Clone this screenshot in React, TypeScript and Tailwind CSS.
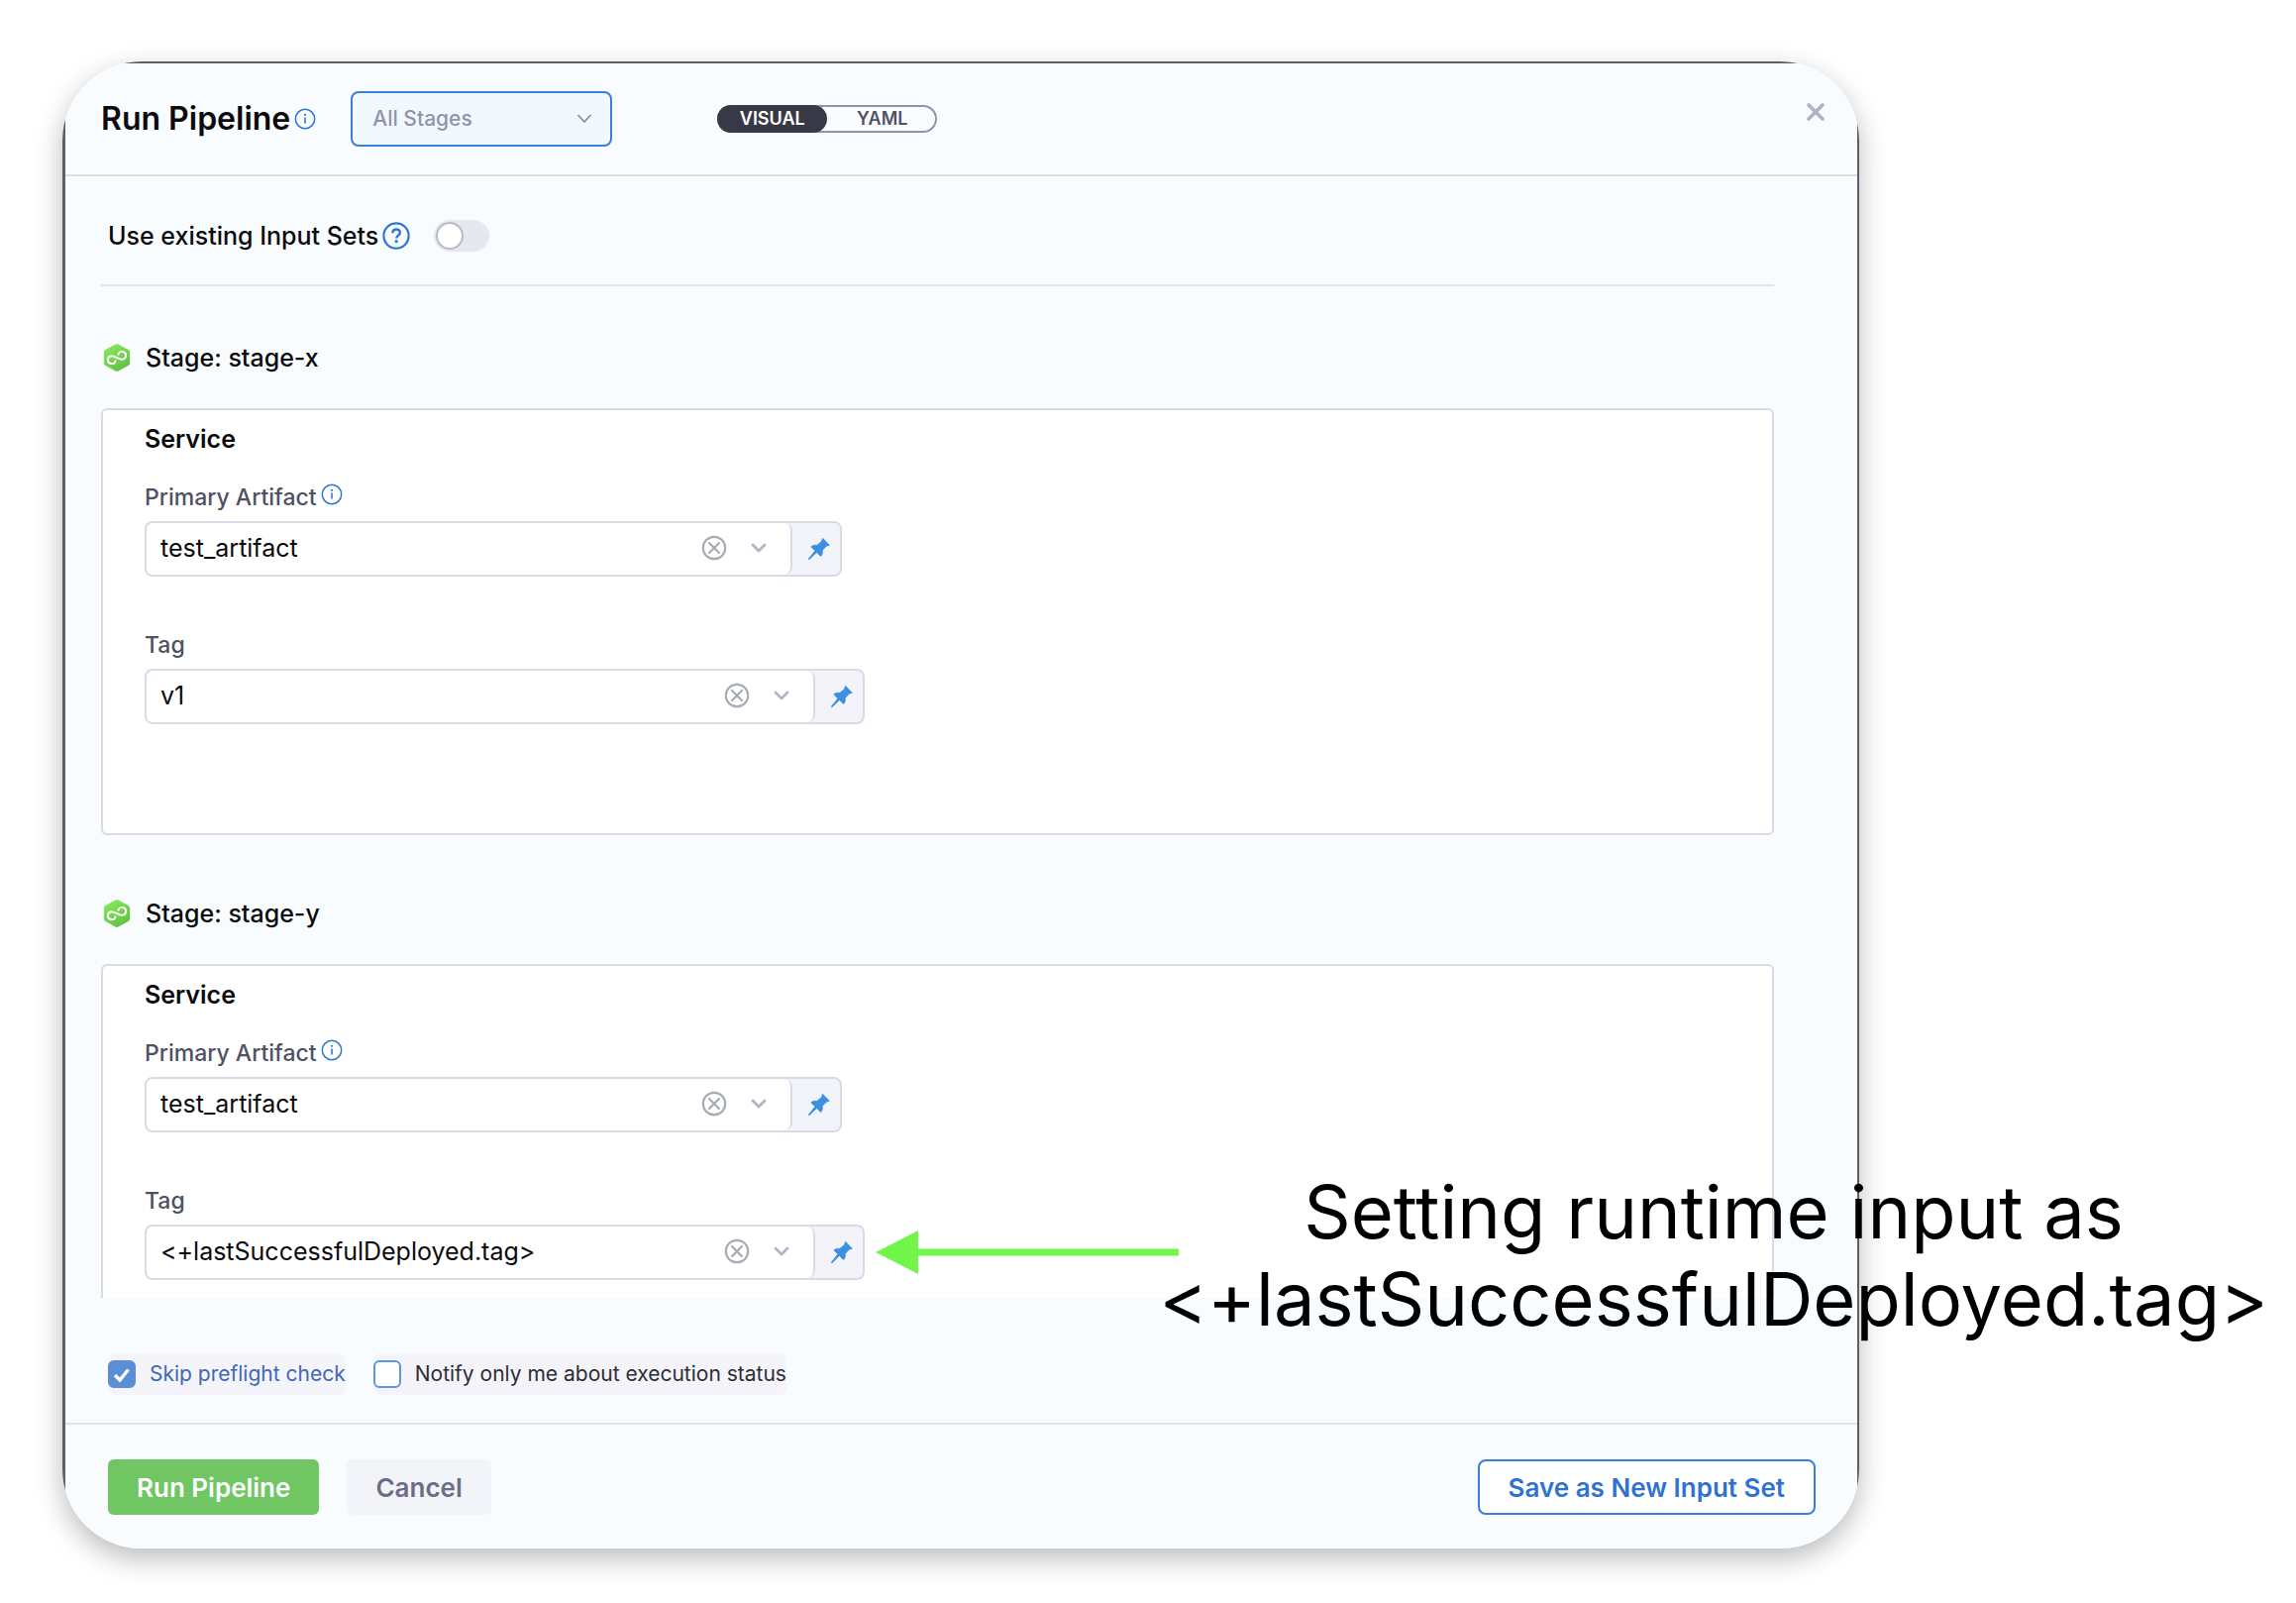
import { useState } from "react";

function InfoIcon() {
  return (
    <svg className="size-[22px] shrink-0" viewBox="0 0 22 22" fill="none" aria-hidden="true">
      <circle cx="11" cy="11" r="9.7" stroke="#2f77d6" strokeWidth="1.5" />
      <circle cx="11" cy="6.8" r="1.1" fill="#2f77d6" />
      <path d="M11 9.6v6" stroke="#2f77d6" strokeWidth="1.6" />
    </svg>
  );
}

function HelpIcon() {
  return (
    <svg className="size-7 shrink-0" viewBox="0 0 28 28" fill="none" aria-hidden="true">
      <circle cx="14" cy="14" r="12.6" stroke="#2b76d8" strokeWidth="2.2" />
      <path
        d="M10.4 11.3c0-2.3 1.5-3.8 3.7-3.8s3.7 1.4 3.7 3.4c0 2.7-3.5 2.9-3.5 5.6"
        stroke="#2b76d8"
        strokeWidth="2.4"
      />
      <circle cx="14.2" cy="19.6" r="1.6" fill="#2b76d8" />
    </svg>
  );
}

function DeployIcon() {
  return (
    <svg className="h-[30px] w-7 shrink-0" viewBox="0 0 28 30" fill="none" aria-hidden="true">
      <defs>
        <linearGradient id="hex" x1="6" y1="2" x2="22" y2="28" gradientUnits="userSpaceOnUse">
          <stop stopColor="#86e958" />
          <stop offset="1" stopColor="#62bf43" />
        </linearGradient>
      </defs>
      <path
        d="M12.6 1.5a2.8 2.8 0 0 1 2.8 0l10.2 5.4a2.8 2.8 0 0 1 1.5 2.5v11.2a2.8 2.8 0 0 1-1.5 2.5l-10.2 5.4a2.8 2.8 0 0 1-2.8 0L2.4 23.1a2.8 2.8 0 0 1-1.5-2.5V9.4a2.8 2.8 0 0 1 1.500-2.500z"
        fill="url(#hex)"
      />
      <path
        d="M12.6 18.2A3.9 3.9 0 1 1 9 13.300C12 13.300 15.500 16.700 19 16.700A3.900 3.900 0 1 0 15.400 11.800"
        stroke="#fff"
        strokeWidth="1.9"
        strokeLinecap="round"
      />
    </svg>
  );
}

function ClearIcon() {
  return (
    <svg className="size-[26px]" viewBox="0 0 26 26" fill="none" stroke="#a6abb6" strokeWidth="2.2" aria-hidden="true">
      <circle cx="13" cy="13" r="11.2" />
      <path d="M8 8l10 10M18 8L8 18" strokeLinecap="round" />
    </svg>
  );
}

function Chevron() {
  return (
    <svg className="h-3 w-4" viewBox="0 0 16 12" fill="none" aria-hidden="true">
      <path d="M2 3l6 6 6-6" stroke="#b2b3c5" strokeWidth="2.8" strokeLinecap="round" strokeLinejoin="round" />
    </svg>
  );
}

function PinIcon() {
  return (
    <svg className="size-6" viewBox="0 0 24 24" aria-hidden="true">
      <path
        d="M15.600 1.300L22.300 8.200L19.200 9.200L15.200 13.600C15.700 15.800 15.200 17.900 13.600 19.600L9.500 15.500L1.900 22.800L1.300 22.200L7.900 13.900L3.800 9.900C5.400 8.400 7.600 8 9.700 8.500L14.500 4.500Z"
        fill="#3d8fe0"
        stroke="#3d8fe0"
        strokeWidth="0.8"
        strokeLinejoin="round"
      />
    </svg>
  );
}

function Field({ id, label, info, value, width }: { id: string; label: string; info?: boolean; value: string; width: string }) {
  const [text, setText] = useState(value);
  return (
    <div>
      <div className="flex h-8 items-center gap-1">
        <label htmlFor={id} className="text-[23px] leading-8 font-medium text-[#4f5162]">
          {label}
        </label>
        {info && (
          <span className="pb-1.5">
            <InfoIcon />
          </span>
        )}
      </div>
      <div className={`mt-2 flex h-14 max-w-full overflow-hidden rounded-lg border-2 border-[#d9dae6] bg-[#f3f3fa] ${width}`}>
        <div className="flex min-w-0 flex-1 items-center rounded-r-lg border-r-2 border-[#d9dae6] bg-white pr-6 pb-0.5">
          <input
            id={id}
            type="text"
            value={text}
            onChange={(e) => setText(e.target.value)}
            className="h-full min-w-0 flex-1 bg-transparent pl-3.5 text-[25px] text-[#0b0b0d] outline-none"
          />
          <button type="button" aria-label={`Clear ${label}`} className="mr-6" onClick={() => setText("")}>
            <ClearIcon />
          </button>
          <button type="button" aria-label={`Show ${label} options`}>
            <Chevron />
          </button>
        </div>
        <button type="button" aria-label={`${label} value type`} className="flex w-12 items-center justify-center pl-1.5">
          <PinIcon />
        </button>
      </div>
    </div>
  );
}

function Stage({ name, tag, last }: { name: string; tag: string; last?: boolean }) {
  return (
    <section>
      <h2 className="flex items-center gap-[15px] pl-0.5 text-[25px] leading-8 font-medium text-[#0b0b0d]">
        <DeployIcon />
        Stage: {name}
      </h2>
      <div
        className={
          last
            ? "mt-[35px] rounded-t-md border-2 border-b-0 border-[#d9dae6] bg-white px-[42px] pt-[13px] pb-[18px]"
            : "mt-[35px] rounded-md border-2 border-[#d9dae6] bg-white px-[42px] pt-[13px] pb-[110px]"
        }
      >
        <h3 className="mb-[27px] text-[25px] leading-8 font-semibold text-[#0b0b0d]">Service</h3>
        <Field id={`${name}-artifact`} label="Primary Artifact" info value="test_artifact" width="w-[704px]" />
        <div className="mt-[53px]">
          <Field id={`${name}-tag`} label="Tag" value={tag} width="w-[727px]" />
        </div>
      </div>
    </section>
  );
}

function Check({ label, checked, onChange, tone }: { label: string; checked: boolean; onChange: () => void; tone: string }) {
  return (
    <label className={`flex h-[42px] items-center gap-3.5 rounded-lg bg-[#f4f4fa] text-[21px] ${tone}`}>
      <span className="relative size-7 shrink-0">
        <input
          type="checkbox"
          checked={checked}
          onChange={onChange}
          className="block size-7 appearance-none rounded-md border-2 border-[#5b96e0] bg-white checked:border-[#5a8fd8] checked:bg-[#5a8fd8]"
        />
        {checked && (
          <svg className="pointer-events-none absolute inset-0 size-7" viewBox="0 0 28 28" fill="none" aria-hidden="true">
            <path d="M7 15l5 5L20.500 9.500" stroke="#fff" strokeWidth="3.400" />
          </svg>
        )}
      </span>
      {label}
    </label>
  );
}

export default function App() {
  const [view, setView] = useState("visual");
  const [useSets, setUseSets] = useState(false);
  const [skip, setSkip] = useState(true);
  const [notify, setNotify] = useState(false);

  return (
    <div className="relative min-h-screen overflow-hidden bg-white pt-[62px] pr-[441px] pb-[54px] pl-[63px] font-['Inter',sans-serif]">
      <main className="overflow-hidden rounded-[80px] shadow-[0_10px_28px_0_rgba(0,0,0,0.27)]">
        <div className="border-t-2 border-r-2 border-l-[3px] border-[#5c6066] bg-[#f9fcff]">
          <header className="flex h-[114px] items-center border-b-2 border-[#d9dde9] pr-8 pl-9">
            <h1 className="text-[32px] leading-10 font-semibold text-[#0b0b0d]">Run Pipeline</h1>
            <span className="ml-1">
              <InfoIcon />
            </span>
            <div className="relative ml-[35px]">
              <select
                aria-label="Stages"
                className="h-14 w-[264px] appearance-none rounded-lg border-2 border-[#3a7fdb] bg-[#f1f9fe] pl-5 text-[21px] font-medium text-[#9293ab]"
              >
                <option>All Stages</option>
              </select>
              <svg className="pointer-events-none absolute top-[22px] right-5 h-3 w-4" viewBox="0 0 16 12" fill="none" aria-hidden="true">
                <path d="M1.500 2l6.500 7 6.500-7" stroke="#8a8ca8" strokeWidth="1.800" />
              </svg>
            </div>
            <div className="ml-[106px] flex h-7 w-[222px] rounded-full border-2 border-[#9293ab] text-lg font-semibold">
              <button
                type="button"
                aria-pressed={view === "visual"}
                onClick={() => setView("visual")}
                className="-my-0.5 -ml-0.5 flex flex-1 items-center justify-center rounded-full text-[#4f5162] aria-pressed:bg-[#383946] aria-pressed:text-white"
              >
                VISUAL
              </button>
              <button
                type="button"
                aria-pressed={view === "yaml"}
                onClick={() => setView("yaml")}
                className="-my-0.5 -mr-0.5 flex flex-1 items-center justify-center rounded-full text-[#4f5162] aria-pressed:bg-[#383946] aria-pressed:text-white"
              >
                YAML
              </button>
            </div>
            <button type="button" aria-label="Close" className="mb-3.5 ml-auto">
              <svg className="size-5" viewBox="0 0 20 20" fill="none" aria-hidden="true">
                <path d="M3 3l14 14M17 3L3 17" stroke="#b0b1c4" strokeWidth="3.600" strokeLinecap="round" />
              </svg>
            </button>
          </header>

          <div className="pr-[84px] pl-9">
            <div className="mb-14 flex items-center border-b-2 border-[#e0e3e8] pt-11 pb-[33px] pl-[7px]">
              <label htmlFor="input-sets" className="text-[25px] leading-8 font-medium text-[#0b0b0d]">
                Use existing Input Sets
              </label>
              <span className="ml-1">
                <HelpIcon />
              </span>
              <span className="relative ml-6 h-8">
                <input
                  id="input-sets"
                  type="checkbox"
                  role="switch"
                  checked={useSets}
                  onChange={() => setUseSets(!useSets)}
                  className="peer block h-8 w-14 appearance-none rounded-full bg-[#e5e8f0] checked:bg-[#5a8fd8]"
                />
                <span className="pointer-events-none absolute top-0.5 left-0.5 size-7 rounded-full border-2 border-[#b9bdc3] bg-white peer-checked:left-6" />
              </span>
            </div>

            <Stage name="stage-x" tag="v1" />
            <div className="mt-[63px]">
              <Stage name="stage-y" tag="<+lastSuccessfulDeployed.tag>" last />
            </div>

            <div className="mt-14 mb-7 flex gap-7 pl-[7px]">
              <Check label="Skip preflight check" checked={skip} onChange={() => setSkip(!skip)} tone="text-[#3f68b5]" />
              <Check
                label="Notify only me about execution status"
                checked={notify}
                onChange={() => setNotify(!notify)}
                tone="text-[#2c2d35]"
              />
            </div>
          </div>

          <footer className="flex items-center gap-7 border-t-2 border-[#e0e3e8] pt-[35px] pr-[42px] pb-[34px] pl-[43px] text-[26px] font-semibold">
            <button type="button" className="h-14 rounded-md bg-[#70c662] px-[29px] text-white">
              Run Pipeline
            </button>
            <button type="button" className="h-14 rounded-md bg-[#f3f3fa] px-[29px] text-[#6b6d85]">
              Cancel
            </button>
            <button type="button" className="ml-auto h-14 rounded-lg border-2 border-[#3a7fdb] bg-white px-[29px] text-[#2f72d0]">
              Save as New Input Set
            </button>
          </footer>
        </div>
      </main>

      <svg className="pointer-events-none absolute top-[1242px] left-[884px] h-11 w-[306px]" viewBox="0 0 306 44" aria-hidden="true">
        <path d="M0 22L43 0V18.500H306V25.500H43V44Z" fill="#72f54a" />
      </svg>
      <p className="pointer-events-none absolute top-[1179px] right-7 text-center text-[74px] leading-[88px] text-black">
        Setting runtime input as
        <br />
        &lt;+lastSuccessfulDeployed.tag&gt;
      </p>
    </div>
  );
}
